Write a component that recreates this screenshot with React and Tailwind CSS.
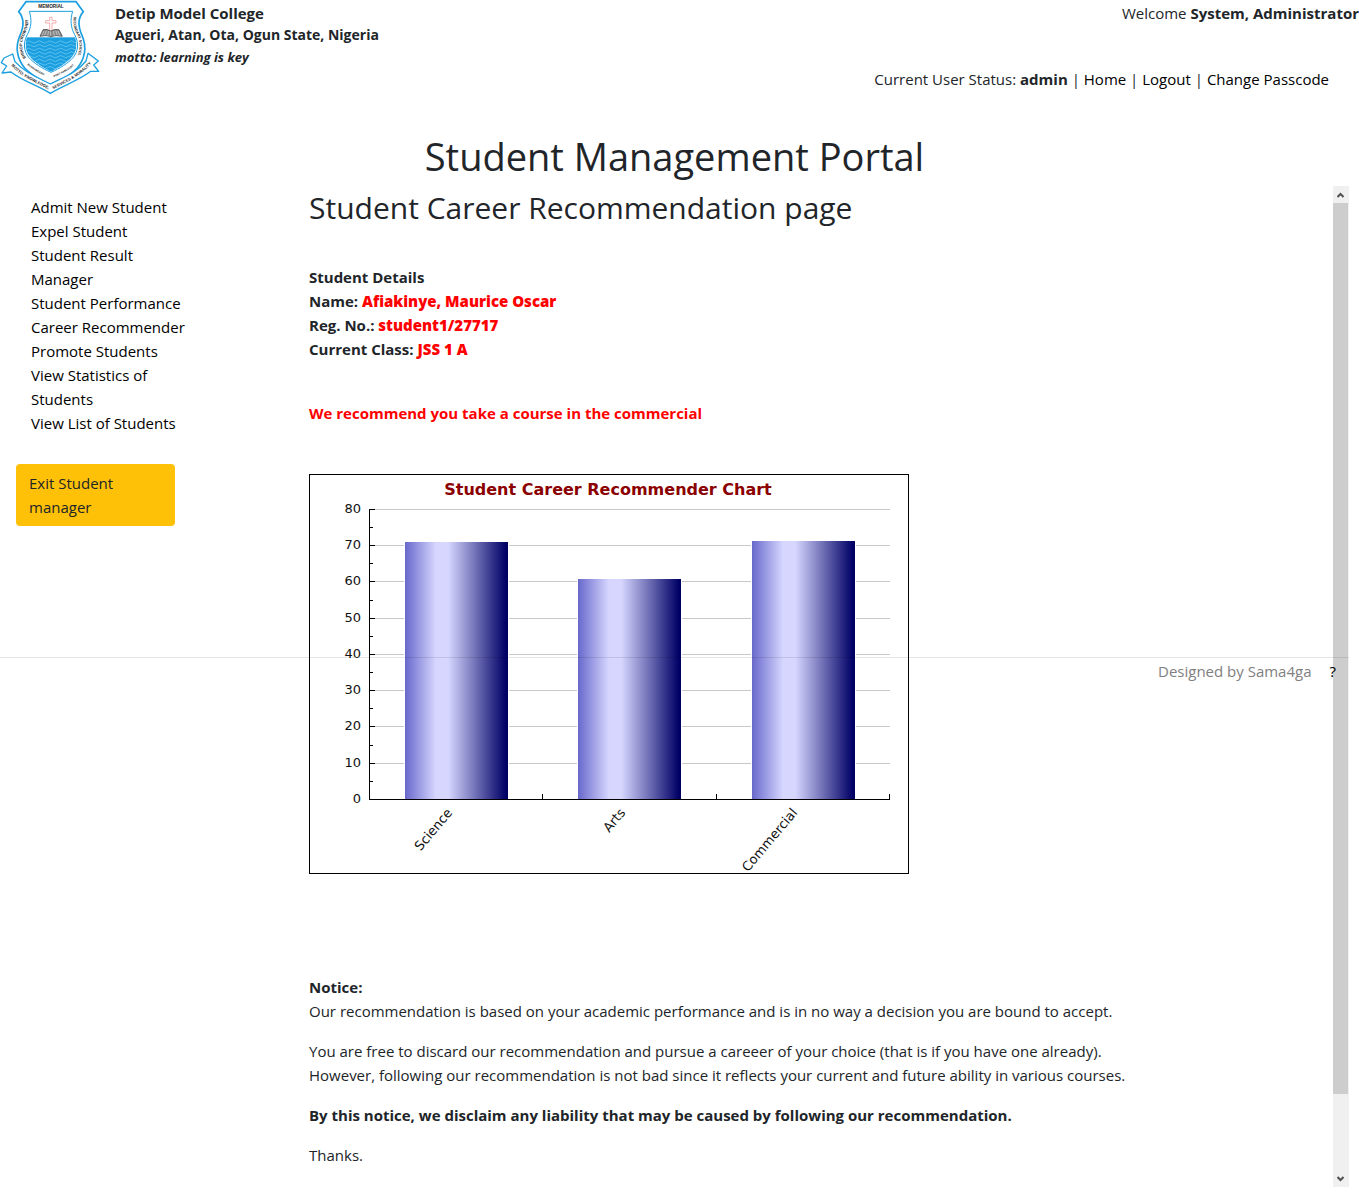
import React from "react";

const navItems = [
  "Admit New Student",
  "Expel Student",
  "Student Result Manager",
  "Student Performance",
  "Career Recommender",
  "Promote Students",
  "View Statistics of Students",
  "View List of Students",
];

const bars = [
  { label: "Science", x: 96, top: 68, tick: 233, lx: 144 },
  { label: "Arts", x: 269, top: 105, tick: 407, lx: 317 },
  { label: "Commercial", x: 443, top: 67, tick: 580, lx: 489 },
];

const gridY = [35, 71, 107, 144, 180, 216, 252, 289];
const minorY = [53, 89, 126, 162, 198, 234, 271, 307];

function Wave({ y }) {
  return (
    <path
      d={`M78 ${y} q8 -7 16 0 t16 0 t16 0 t16 0 t16 0 t16 0 t16 0 t16 0 t16 0 t16 0`}
      fill="none"
      stroke="#7fd0f3"
      strokeWidth="2"
    />
  );
}

function Logo() {
  return (
    <svg viewBox="0 0 300 285" className="w-[100px] h-[95px] shrink-0" role="img" aria-label="School crest">
      <defs>
        <clipPath id="inner">
          <path d="M90 44 C97 62 94 85 84 104 C74 125 74 150 88 168 C102 186 128 203 153 215 C178 203 204 186 218 168 C232 150 232 125 222 104 C212 85 209 62 216 44 Z" />
        </clipPath>
        <path id="leftText" d="M78 174 C64 152 62 124 76 100 C84 84 86 70 83 40" />
        <path id="rightText" d="M221 50 C219 74 222 86 230 102 C242 126 241 150 228 180" />
        <path id="lowLeft" d="M82 194 C98 209 118 220 146 233" />
        <path id="lowRight" d="M162 232 C186 221 208 210 232 188" />
        <path id="mottoLeft" d="M34 196 C64 234 110 246 154 273" />
        <path id="mottoRight" d="M160 268 C194 248 236 234 272 192" />
      </defs>
      <path
        d="M78 5 H228 L250 35 C232 56 234 80 246 106 C262 142 254 178 232 204 C210 228 180 242 153 258 C126 242 96 228 74 204 C52 178 44 142 60 106 C72 80 74 56 56 35 Z"
        fill="#fff"
        stroke="#1b9fe0"
        strokeWidth="5"
      />
      <path
        d="M88 34 H218 C210 60 212 82 224 104 C238 130 234 154 220 172 C204 190 180 205 153 217 C126 205 102 190 86 172 C72 154 68 130 82 104 C94 82 96 60 88 34 Z"
        fill="#fff"
        stroke="#1b9fe0"
        strokeWidth="3"
      />
      <g clipPath="url(#inner)">
        <rect x="70" y="112" width="170" height="110" fill="#1b9fe0" />
        {[126, 137, 148, 159, 170, 181, 192, 203].map((y) => (
          <Wave key={y} y={y} />
        ))}
      </g>
      <path d="M149 52 h7 v10 h12 v7 h-12 v25 h-7 v-25 h-12 v-7 h12 Z" fill="#fff" stroke="#ee8a8a" strokeWidth="2" />
      <path d="M120 109 L129 89 Q143 86 152 93 Q164 86 177 89 L187 109 Q166 104 153 110 Q140 104 120 109 Z" fill="#888" stroke="#333" strokeWidth="2" />
      <path d="M152 94 V108 M132 93 L126 106 M139 92 L134 105 M146 93 L143 106 M160 93 L163 106 M167 92 L172 105 M173 92 L180 106" stroke="#ddd" strokeWidth="2" />
      <path
        d="M12 174 L38 162 L45 185 C75 218 112 232 151 252 C190 232 231 218 258 183 L264 160 L295 183 L281 195 L296 214 L272 214 C240 240 190 256 151 280 C112 256 62 240 33 216 L6 219 L20 198 L4 188 Z"
        fill="#fff"
        stroke="#1b9fe0"
        strokeWidth="4"
        strokeLinejoin="round"
      />
      <g className="font-['Liberation_Sans',sans-serif] font-bold" fill="#222">
        <text x="153" y="25" fontSize="14" textAnchor="middle">MEMORIAL</text>
        <text fontSize="12"><textPath href="#leftText">BISHOP CROWTHER</textPath></text>
        <text fontSize="11"><textPath href="#rightText">SECONDARY SCHOOL</textPath></text>
        <text fontSize="8"><textPath href="#lowLeft">BURGUMEAMA</textPath></text>
        <text fontSize="8"><textPath href="#lowRight">PORT HARCOURT</textPath></text>
        <text fontSize="12"><textPath href="#mottoLeft">MOTTO: KNOWLEDGE,</textPath></text>
        <text fontSize="12"><textPath href="#mottoRight">SERVICES &amp; MORALITY</textPath></text>
      </g>
    </svg>
  );
}

function Chart() {
  return (
    <svg width="600" height="400" viewBox="0 0 600 400" className="block max-w-none overflow-visible font-['DejaVu_Sans',sans-serif]" role="img" aria-label="Student Career Recommender Chart">
      <defs>
        <linearGradient id="bar">
          <stop offset="0" stopColor="#6868cc" />
          <stop offset="0.3" stopColor="#d6d6ff" />
          <stop offset="0.42" stopColor="#d6d6ff" />
          <stop offset="0.98" stopColor="#000066" />
          <stop offset="1" stopColor="#000060" />
        </linearGradient>
      </defs>
      <rect x="0.5" y="0.5" width="599" height="399" fill="#fff" stroke="#000" />
      <text x="299" y="21" fontSize="16" fontWeight="700" textAnchor="middle" fill="#8b0000">
        Student Career Recommender Chart
      </text>
      <g shapeRendering="crispEdges">
        {gridY.map((y) => (
          <rect key={y} x="61" y={y} width="520" height="1" fill="#c8c8c8" />
        ))}
        {bars.map((b) => (
          <g key={b.label}>
            <rect x={b.x - 1} y={b.top - 1} width="105" height={326 - b.top} fill="#fff" />
            <rect x={b.x} y={b.top} width="103" height={325 - b.top} fill="url(#bar)" />
            <rect x={b.tick} y="320" width="1" height="6" fill="#000" />
          </g>
        ))}
        <rect x="60" y="35" width="1" height="291" fill="#000" />
        <rect x="60" y="325" width="521" height="1" fill="#000" />
        {gridY.map((y) => (
          <rect key={y} x="60" y={y} width="6" height="1" fill="#000" />
        ))}
        {minorY.map((y) => (
          <rect key={y} x="60" y={y} width="4" height="1" fill="#000" />
        ))}
      </g>
      <g fontSize="13" fill="#111">
        {[...gridY, 325].map((y, i) => (
          <text key={y} x="52" y={y + 4} textAnchor="end">{80 - i * 10}</text>
        ))}
        {bars.map((b) => (
          <text key={b.label} textAnchor="end" transform={`translate(${b.lx} 339) rotate(-50)`}>
            {b.label}
          </text>
        ))}
      </g>
    </svg>
  );
}

function ScrollArrow({ down }) {
  return (
    <button type="button" aria-label={down ? "Scroll down" : "Scroll up"} className="flex h-[17px] w-[15px] items-center justify-center">
      <svg width="7" height="6" viewBox="0 0 7 6" fill="none" stroke="#505050" strokeWidth="2">
        <path d={down ? "M0.5 1 L3.5 4 L6.5 1" : "M0.5 5 L3.5 2 L6.5 5"} />
      </svg>
    </button>
  );
}

export default function App() {
  return (
    <div className="min-h-screen bg-white pb-[6px] font-['Open_Sans',sans-serif] text-[15px] leading-6 text-[#212529]">
      <header className="flex h-[132px] justify-between">
        <div className="flex items-start gap-[15px]">
          <Logo />
          <div className="pt-[2px] font-bold leading-[22px]">
            <p>Detip Model College</p>
            <p className="text-sm leading-[22px]">Agueri, Atan, Ota, Ogun State, Nigeria</p>
            <p className="text-[13px] italic leading-[22px]">motto: learning is key</p>
          </div>
        </div>
        <div className="flex flex-col gap-[42px] pt-px text-right">
          <p>Welcome <b>System, Administrator</b></p>
          <nav className="pr-[30px]">
            Current User Status: <b>admin</b> | <a href="#home" className="text-black">Home</a> |{" "}
            <a href="#logout" className="text-black">Logout</a> |{" "}
            <a href="#passcode" className="text-black">Change Passcode</a>
          </nav>
        </div>
      </header>

      <div className="relative mr-[10px]">
        <h1 className="h-[54px] text-center text-[38px] leading-[48px]">Student Management Portal</h1>
        <div className="flex">
          <aside className="w-[309px] shrink-0 pt-[9px]">
            <ul className="ml-[31px] w-[158px] text-black">
              {navItems.map((item) => (
                <li key={item}><a href="#nav">{item}</a></li>
              ))}
            </ul>
            <button type="button" className="ml-4 mt-[29px] w-[159px] rounded bg-[#ffc107] px-[13px] py-[7px] text-left leading-6">
              Exit Student manager
            </button>
          </aside>

          <main className="min-w-0 grow pb-5">
            <h2 className="pt-[3px] text-[30px] leading-[38px]">Student Career Recommendation page</h2>
            <div className="mt-[38px] font-bold">
              <p>Student Details</p>
              <p>Name: <span className="font-extrabold text-[#f00]">Afiakinye, Maurice Oscar</span></p>
              <p>Reg. No.: <span className="font-extrabold text-[#f00]">student1/27717</span></p>
              <p>Current Class: <span className="font-extrabold text-[#f00]">JSS 1 A</span></p>
            </div>
            <p className="mb-[49px] mt-10 font-bold text-[#f00]">We recommend you take a course in the commercial</p>
            <Chart />
            <section className="mt-[101px] flex flex-col gap-4">
              <p>
                <b>Notice:</b>
                <br />
                Our recommendation is based on your academic performance and is in no way a decision you are bound to accept.
              </p>
              <p>
                You are free to discard our recommendation and pursue a careeer of your choice (that is if you have one already).
                <br />
                However, following our recommendation is not bad since it reflects your current and future ability in various courses.
              </p>
              <p className="font-bold">By this notice, we disclaim any liability that may be caused by following our recommendation.</p>
              <p>Thanks.</p>
            </section>
          </main>

          <div className="flex w-4 shrink-0 flex-col bg-[#f0f0f0]">
            <ScrollArrow />
            <div className="h-[891px] w-[15px] bg-[#cdcdcd]" />
            <div className="grow" />
            <ScrollArrow down />
          </div>
        </div>

        <footer className="absolute inset-x-0 top-[525px] flex justify-end gap-[18px] border-t border-black/10 pr-[13px] pt-px">
          <span className="text-[#808080]">Designed by Sama4ga</span>
          <a href="#help" className="text-black">?</a>
        </footer>
      </div>
    </div>
  );
}
